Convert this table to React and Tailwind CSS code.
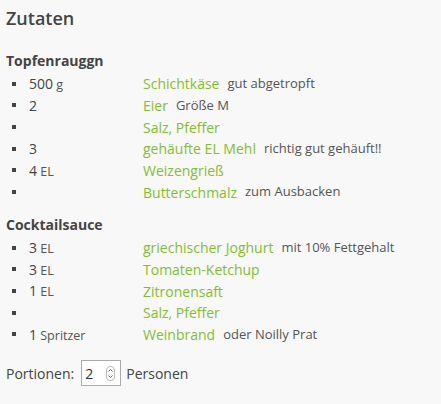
import React, { useState } from 'react';

const sections = [
    {
        title: 'Topfenrauggn',
        items: [
            { qty: '500', unit: 'g', name: 'Schichtkäse', note: 'gut abgetropft' },
            { qty: '2', unit: '', name: 'Eier', note: 'Größe M' },
            { qty: '', unit: '', name: 'Salz, Pfeffer', note: '' },
            { qty: '3', unit: '', name: 'gehäufte EL Mehl', note: 'richtig gut gehäuft!!' },
            { qty: '4', unit: 'EL', name: 'Weizengrieß', note: '' },
            { qty: '', unit: '', name: 'Butterschmalz', note: 'zum Ausbacken' },
        ],
    },
    {
        title: 'Cocktailsauce',
        items: [
            { qty: '3', unit: 'EL', name: 'griechischer Joghurt', note: 'mit 10% Fettgehalt' },
            { qty: '3', unit: 'EL', name: 'Tomaten-Ketchup', note: '' },
            { qty: '1', unit: 'EL', name: 'Zitronensaft', note: '' },
            { qty: '', unit: '', name: 'Salz, Pfeffer', note: '' },
            { qty: '1', unit: 'Spritzer', name: 'Weinbrand', note: 'oder Noilly Prat' },
        ],
    },
];

const IngredientRow = ({ item }) => (
    <li className="flex items-center h-[21.67px]">
        <span className="w-[23px] flex justify-start pl-[6px]">
            <span className="block w-[4px] h-[4px] bg-[#444]" />
        </span>
        <span className="w-[114px] text-[14px] text-[#444]">
            {item.qty}
            {item.unit && <span className="text-[12.5px] text-[#555]"> {item.unit}</span>}
        </span>
        <span className="text-[14px] text-[#80c12a]">{item.name}</span>
        {item.note && <span className="ml-[8px] text-[13px] text-[#555]">{item.note}</span>}
    </li>
);

export default function App() {
    const [portions, setPortions] = useState(2);

    return (
        <div
            className="w-[441px] h-[404px] bg-[#f8f8f8] px-[6px] pt-[6px] text-[#444]"
            style={{ fontFamily: '"Open Sans", "Noto Sans", sans-serif' }}
        >
            <h2 className="text-[18px] font-semibold leading-[24px] text-[#444]">Zutaten</h2>

            {sections.map((sec, i) => (
                <div key={i} className={i === 0 ? 'mt-[21px]' : 'mt-[12px]'}>
                    <h3 className="text-[14px] font-bold leading-[20px] text-[#444]">{sec.title}</h3>
                    <ul className="mt-[2px]">
                        {sec.items.map((item, j) => (
                            <IngredientRow key={j} item={item} />
                        ))}
                    </ul>
                </div>
            ))}

            <div className="mt-[15px] flex items-center gap-[5px] text-[14px] text-[#444]">
                <span>Portionen:</span>
                <div className="relative ml-[2px] w-[40px] h-[26px] border border-[#aaa] bg-white flex items-center">
                    <input
                        type="text"
                        value={portions}
                        onChange={(e) => setPortions(e.target.value)}
                        className="w-[22px] pl-[3px] text-[14px] text-[#333] bg-transparent outline-none"
                    />
                    <span className="absolute right-[5px] top-[5px] w-[9px] h-[15px] border border-[#bbb] rounded-[4px] flex flex-col items-center justify-center">
                        <svg width="5" height="11" viewBox="0 0 5 11">
                            <path d="M0.5 3.5 L2.5 1.5 L4.5 3.5" fill="none" stroke="#555" strokeWidth="0.9" />
                            <path d="M0.5 7.5 L2.5 9.5 L4.5 7.5" fill="none" stroke="#555" strokeWidth="0.9" />
                        </svg>
                    </span>
                </div>
                <span>Personen</span>
            </div>
        </div>
    );
}
